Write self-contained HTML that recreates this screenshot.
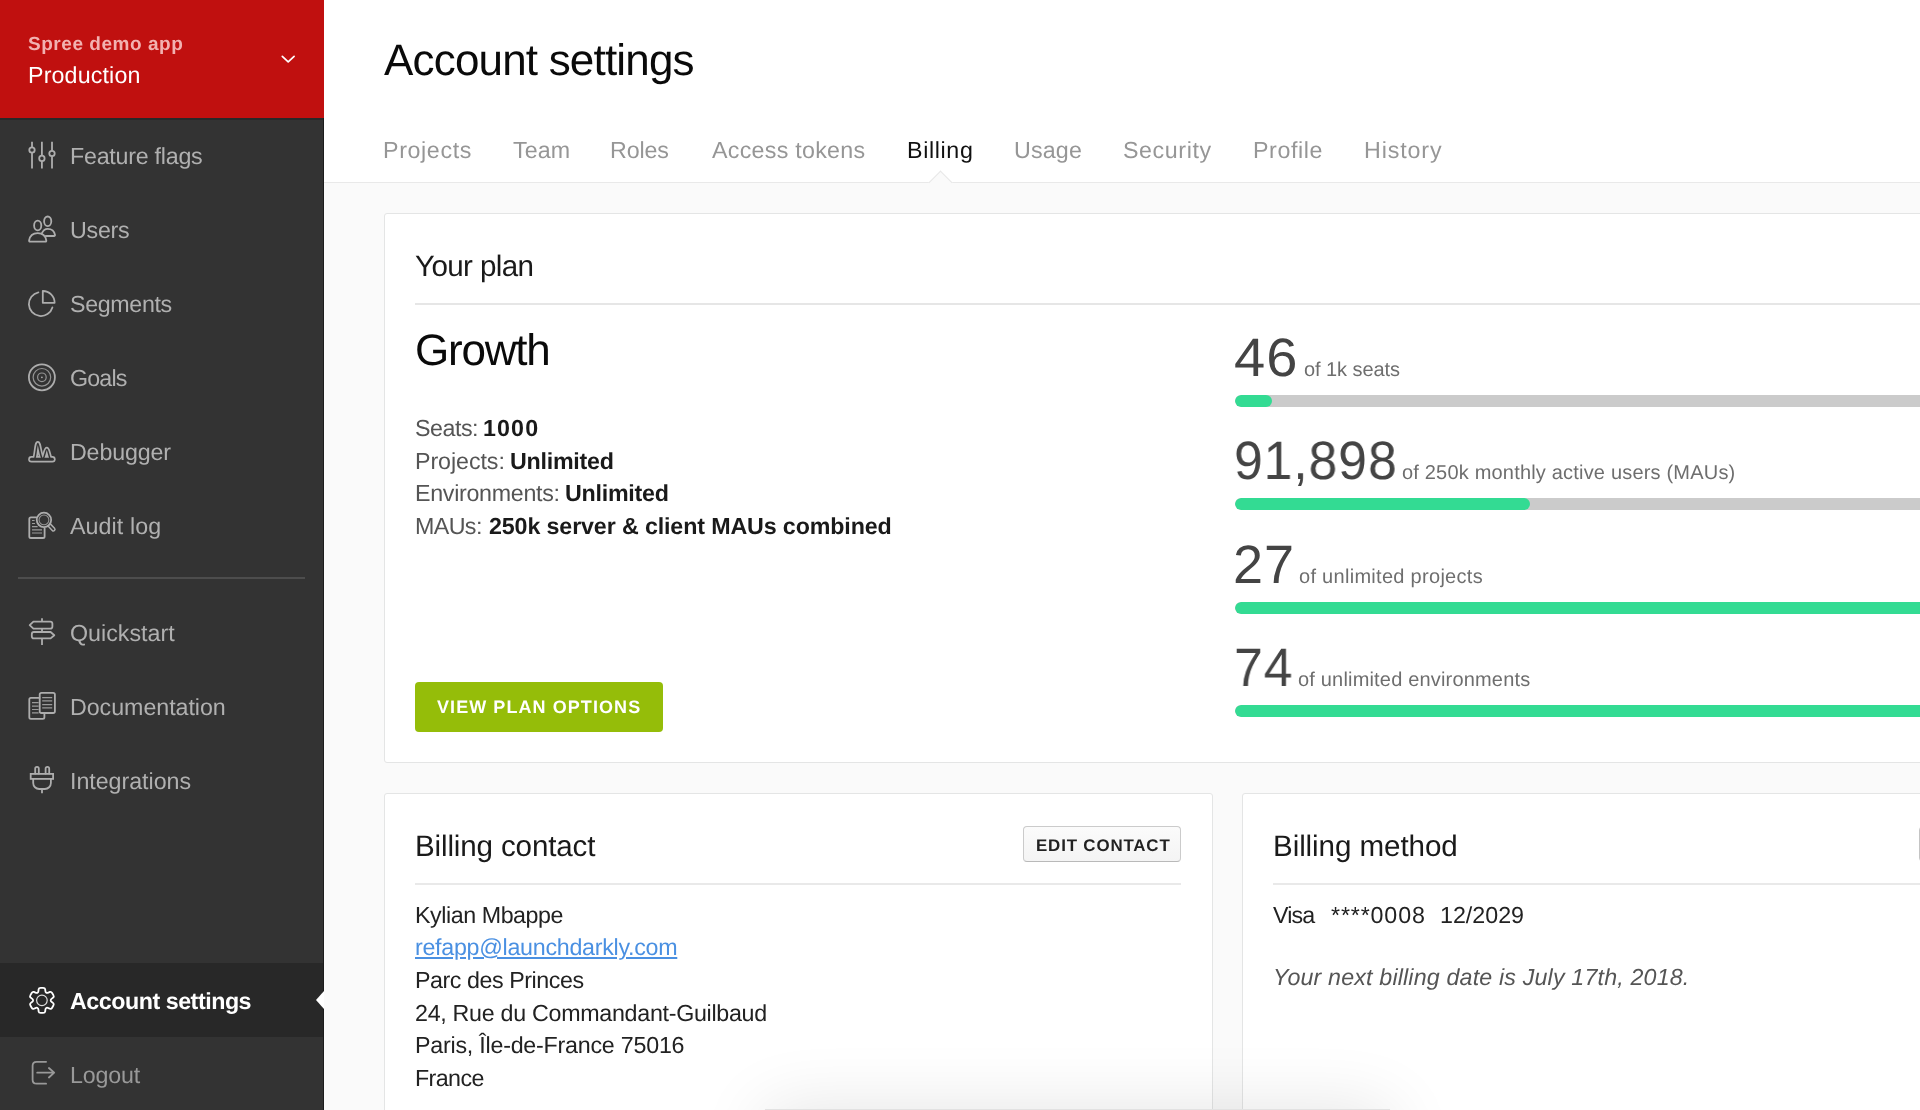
<!DOCTYPE html>
<html lang="en">
<head>
<meta charset="utf-8">
<title>Account settings</title>
<style>
*{box-sizing:border-box;margin:0;padding:0}
html,body{width:1920px;height:1110px;overflow:hidden;background:#fafafa;font-family:"Liberation Sans",sans-serif;color:#222}
.t{position:absolute;white-space:nowrap;line-height:1;z-index:5;will-change:transform;text-rendering:geometricPrecision}
.t b{color:#222;font-weight:bold}
#side{position:absolute;left:0;top:0;width:324px;height:1110px;background:#333;border-right:1px solid #1c1c1c}
#env{position:absolute;left:0;top:0;width:324px;height:118px;background:#c0100f}
#envline{position:absolute;left:0;top:118px;width:323px;height:2px;background:#272929}
.ico{position:absolute;left:27px;width:30px;height:30px;fill:none;stroke:#b9b9b9;stroke-width:1.5;stroke-linecap:round;stroke-linejoin:round;z-index:5}
#sep{position:absolute;left:18px;top:577px;width:287px;height:2px;background:#4d4d4d}
#active{position:absolute;left:0;top:963px;width:323px;height:74px;background:#282828}
#arrow{position:absolute;left:316px;top:991px;width:0;height:0;border-top:9px solid transparent;border-bottom:9px solid transparent;border-right:8px solid #fff}
#head{position:absolute;left:324px;top:0;width:1596px;height:183px;background:#fff;border-bottom:1px solid #e9e9e9}
#caret{position:absolute;left:932px;top:174px;width:17px;height:17px;background:#fafafa;border-left:1px solid #e7e7e7;border-top:1px solid #e7e7e7;transform:rotate(45deg)}
.card{position:absolute;background:#fff;border:1px solid #e4e5e5;border-radius:3px}
.hr{position:absolute;height:2px;background:#e9e9e9}
.bar{position:absolute;left:1235px;width:800px;height:12px;border-radius:6px;background:#cbcbcb;overflow:hidden}
.bar i{display:block;height:12px;border-radius:6px;background:#33db93}
.btn{position:absolute}
#toast{position:absolute;left:765px;top:1109px;width:625px;height:80px;background:#e4e4e4;border-top:1px solid #e2e2e2;box-shadow:0 0 70px rgba(0,0,0,.11);z-index:8}
</style>
</head>
<body>
<div id="side">
  <div id="env"></div>
  <div id="envline"></div>
  <div id="sep"></div>
  <div id="active"></div>
  <div id="arrow"></div>
</div>
<svg id="icons" width="324" height="1110" viewBox="0 0 324 1110" style="position:absolute;left:0;top:0;z-index:6" fill="none" stroke="#adadad" stroke-width="1.8" stroke-linecap="round" stroke-linejoin="round">
<!-- chevron -->
<path d="M282.3 56.3l5.9 5.6 5.9-5.6" stroke="#fff" stroke-width="1.7"/>
<!-- feature flags -->
<g stroke-linecap="butt"><path d="M32 141.8V168.6M41.9 141.8V168.6M52 141.8V168.6"/>
<circle cx="32" cy="150" r="2.7" fill="#333"/><circle cx="41.9" cy="158.4" r="2.7" fill="#333"/><circle cx="52" cy="153.5" r="2.7" fill="#333"/></g>
<!-- users -->
<ellipse cx="47.7" cy="221.3" rx="3.6" ry="4.8"/>
<path d="M41.8 233.4C43 230.5 45 228.8 47.7 228.8C52 228.8 54.4 231.6 55 235Q55.1 236 54.1 236H45.8"/>
<ellipse cx="37.7" cy="225.5" rx="3.6" ry="4.8"/>
<path d="M30 241.6Q29 241.6 29.1 240.5C29.8 236 33 233.1 37.7 233.1C42.4 233.1 45.6 236 46.3 240.5Q46.4 241.6 45.4 241.6Z"/>
<!-- segments -->
<path d="M38.4 292.3A12 12 0 1 0 52.4 307.4"/>
<path d="M42.8 291A11.8 11.8 0 0 1 54.6 302.8H42.8Z"/>
<!-- goals -->
<circle cx="41.9" cy="377.3" r="13"/><circle cx="41.9" cy="377.3" r="8.8" stroke-width="1.2" opacity=".8"/><circle cx="41.9" cy="377.3" r="4.3" stroke-width="1.2" opacity=".8"/><circle cx="41.9" cy="377.3" r=".9" fill="#adadad" stroke="none"/>
<!-- debugger -->
<g stroke-linejoin="round"><path d="M31.4 459.3H52.4" stroke-width="6.4"/><path d="M34.6 459.3C36.2 455 36.6 443.4 37.8 443.4C39 443.4 39.8 455 42.4 459.3" stroke-width="4.9"/><path d="M43 459.3C45 456 45.6 449.2 46.8 449.2C48 449.2 48.6 456 50.4 459.3" stroke-width="4.9"/>
<path d="M31.4 459.3H52.4" stroke="#333" stroke-width="3"/><path d="M34.6 459.3C36.2 455 36.6 443.4 37.8 443.4C39 443.4 39.8 455 42.4 459.3" stroke="#333" stroke-width="1.5"/><path d="M43 459.3C45 456 45.6 449.2 46.8 449.2C48 449.2 48.6 456 50.4 459.3" stroke="#333" stroke-width="1.5"/></g>
<!-- audit log -->
<path d="M36.2 517.4H30.9Q29.3 517.4 29.3 519V536.4Q29.3 538 30.9 538H43Q44.6 538 44.6 536.4V528.2"/>
<g stroke-width="1.2" stroke-linecap="butt" opacity=".85"><path d="M32 520.5H34.6M32 523.5H35M32 526.6H37.6M32 529.8H42M32 533H42"/></g>
<path d="M49.4 525.2L53.4 529.4" stroke-width="4.6"/><path d="M49.4 525.2L53.4 529.4" stroke="#333" stroke-width="1.6"/>
<circle cx="43.95" cy="519.9" r="7.2" fill="#333"/><circle cx="43.95" cy="519.9" r="4.9" stroke-width="1.1" opacity=".8"/>
<!-- quickstart -->
<g stroke-linecap="butt"><path d="M42 618.2V621.4M42 628.8V631.8M42 638.6V645"/></g>
<path d="M29.7 625.1L33.4 621.6H50.2Q52.4 621.6 52.4 623.8V626.4Q52.4 628.6 50.2 628.6H33.4Z"/>
<path d="M54.3 635.2L50.6 632H33.9Q31.8 632 31.8 634.2V636.2Q31.8 638.4 33.9 638.4H50.6Z"/>
<!-- documentation -->
<path d="M39.5 697.9H30.9Q29.3 697.9 29.3 699.5V717.2Q29.3 718.8 30.9 718.8H42.8Q44.4 718.8 44.4 717.2V713.6"/>
<rect x="39.7" y="692.8" width="15.2" height="20.2" rx="1.8"/>
<g stroke-width="1.2" stroke-linecap="butt" opacity=".85"><path d="M42.2 697.6H52.2M42.2 700.9H52.2M42.2 704.6H52.2M42.2 707.8H52.2M32 702.7H38.6M32 706.2H38.6M32 709.5H38.6M32 712.8H38.6"/></g>
<!-- integrations -->
<path d="M35.2 773.6V768.6a1.8 1.8 0 0 1 3.6 0V773.6M45.6 773.6V768.6a1.8 1.8 0 0 1 3.6 0V773.6"/>
<rect x="30.7" y="773.9" width="22.4" height="5" stroke-linejoin="miter"/>
<path d="M33.2 779V783a6 6 0 0 0 6 6h5.7a6 6 0 0 0 6-6V779"/><path d="M42 789V793.2" stroke-linecap="butt"/>
<!-- gear -->
<path d="M37.47 992.68L37.79 992.50Q38.27 992.22 38.44 990.90L38.66 989.14Q38.83 987.82 40.67 987.82L43.13 987.82Q44.97 987.82 45.14 989.14L45.36 990.90Q45.53 992.22 46.01 992.50L46.64 992.87Q47.12 993.14 48.35 992.63L49.99 991.94Q51.22 991.43 52.14 993.02L53.36 995.15Q54.28 996.74 53.22 997.55L51.81 998.62Q50.75 999.43 50.75 999.98L50.75 1000.72Q50.75 1001.27 51.81 1002.08L53.22 1003.15Q54.28 1003.96 53.36 1005.55L52.14 1007.68Q51.22 1009.27 49.99 1008.76L48.35 1008.07Q47.12 1007.56 46.64 1007.83L46.01 1008.20Q45.53 1008.48 45.36 1009.80L45.14 1011.56Q44.97 1012.88 43.13 1012.88L40.67 1012.88Q38.83 1012.88 38.66 1011.56L38.44 1009.80Q38.27 1008.48 37.79 1008.20L37.16 1007.83Q36.68 1007.56 35.45 1008.07L33.81 1008.76Q32.58 1009.27 31.66 1007.68L30.44 1005.55Q29.52 1003.96 30.58 1003.15L31.99 1002.08Q33.05 1001.27 33.05 1000.72L33.05 999.98Q33.05 999.43 31.99 998.62L30.58 997.55Q29.52 996.74 30.44 995.15L31.66 993.02Q32.58 991.43 33.81 991.94L35.45 992.63Q36.68 993.14 37.16 992.87Z" stroke="#fff" stroke-width="1.8"/><circle cx="41.9" cy="1000.35" r="5.3" stroke="#ddd" stroke-width="1.2"/>
<!-- logout -->
<g stroke="#999" stroke-width="1.8"><path d="M46.1 1061.8H36.6Q32.6 1061.8 32.6 1065.8V1079.7Q32.6 1083.7 36.6 1083.7H46.1"/><path d="M37.2 1072.7H54M48.9 1068L54.2 1072.7L48.9 1077.5"/></g>
</svg>
<div id="head"></div>
<div id="caret"></div>

<div class="card" style="left:384px;top:213px;width:1700px;height:550px"></div>
<div class="hr" style="left:415px;top:303px;width:1600px;height:1.5px;background:#e6e6e6"></div>
<div class="btn" style="left:415px;top:682px;width:248px;height:50px;background:#95bd09;border-radius:4px"></div>
<div class="bar" style="top:395px"><i style="width:37px"></i></div>
<div class="bar" style="top:498px"><i style="width:295px"></i></div>
<div class="bar" style="top:602px"><i style="width:800px"></i></div>
<div class="bar" style="top:705px"><i style="width:800px"></i></div>

<div class="card" style="left:384px;top:793px;width:829px;height:400px"></div>
<div class="btn" style="left:1023px;top:826px;width:158px;height:36px;border:1px solid #cbcbcb;border-bottom-color:#b9b9b9;border-radius:4px;background:linear-gradient(#fbfbfb,#f4f4f4)"></div>
<div class="hr" style="left:415px;top:883px;width:766px"></div>

<div class="card" style="left:1242px;top:793px;width:842px;height:400px"></div>
<div class="hr" style="left:1273px;top:883px;width:760px"></div>
<div class="btn" style="left:1919px;top:826px;width:120px;height:36px;border:1px solid #c4c4c4;border-radius:4px;background:#f7f7f7"></div>
<div id="toast"></div>

<div class="t" id="spree" style="left:28px;top:35px;font-size:19px;letter-spacing:0.54px;font-weight:bold;color:#f2b1b0">Spree demo app</div>
<div class="t" id="prod" style="left:28px;top:64px;font-size:23.25px;letter-spacing:0.14px;color:#fff">Production</div>
<div class="t" id="n1" style="left:70px;top:145px;font-size:23.25px;letter-spacing:-0.25px;color:#b0b0b0">Feature flags</div>
<div class="t" id="n2" style="left:70px;top:219px;font-size:23.25px;letter-spacing:-0.25px;color:#b0b0b0">Users</div>
<div class="t" id="n3" style="left:70px;top:293px;font-size:23.25px;letter-spacing:-0.35px;color:#b0b0b0">Segments</div>
<div class="t" id="n4" style="left:70px;top:367px;font-size:23.25px;letter-spacing:-0.84px;color:#b0b0b0">Goals</div>
<div class="t" id="n5" style="left:70px;top:441px;font-size:23.25px;letter-spacing:-0.17px;color:#b0b0b0">Debugger</div>
<div class="t" id="n6" style="left:70px;top:515px;font-size:23.25px;letter-spacing:0.08px;color:#b0b0b0">Audit log</div>
<div class="t" id="n7" style="left:70px;top:622px;font-size:23.25px;letter-spacing:0px;color:#b0b0b0">Quickstart</div>
<div class="t" id="n8" style="left:70px;top:696px;font-size:23.25px;letter-spacing:-0.05px;color:#b0b0b0">Documentation</div>
<div class="t" id="n9" style="left:70px;top:770px;font-size:23.25px;letter-spacing:-0.04px;color:#b0b0b0">Integrations</div>
<div class="t" id="n10" style="left:70px;top:990px;font-size:23.25px;letter-spacing:-0.47px;color:#fff;font-weight:bold">Account settings</div>
<div class="t" id="n11" style="left:70px;top:1064px;font-size:23.25px;letter-spacing:-0.18px;color:#999">Logout</div>
<div class="t" id="title" style="left:384px;top:39px;font-size:44px;letter-spacing:-0.82px;color:#0a0a0a">Account settings</div>
<div class="t" id="t1" style="left:382.5px;top:139px;font-size:23.25px;letter-spacing:0.63px;color:#969696">Projects</div>
<div class="t" id="t2" style="left:512.5px;top:139px;font-size:23.25px;letter-spacing:0.1px;color:#969696">Team</div>
<div class="t" id="t3" style="left:610.1px;top:139px;font-size:23.25px;letter-spacing:-0.12px;color:#969696">Roles</div>
<div class="t" id="t4" style="left:712.4px;top:139px;font-size:23.25px;letter-spacing:0.27px;color:#969696">Access tokens</div>
<div class="t" id="t5" style="left:907.4px;top:139px;font-size:23.25px;letter-spacing:0.64px;color:#111">Billing</div>
<div class="t" id="t6" style="left:1014.3px;top:139px;font-size:23.25px;letter-spacing:0.17px;color:#969696">Usage</div>
<div class="t" id="t7" style="left:1123.3px;top:139px;font-size:23.25px;letter-spacing:0.58px;color:#969696">Security</div>
<div class="t" id="t8" style="left:1253.1px;top:139px;font-size:23.25px;letter-spacing:0.6px;color:#969696">Profile</div>
<div class="t" id="t9" style="left:1364.4px;top:139px;font-size:23.25px;letter-spacing:0.87px;color:#969696">History</div>
<div class="t" id="yp" style="left:415px;top:252px;font-size:29.6px;letter-spacing:-0.62px;color:#1a1a1a">Your plan</div>
<div class="t" id="growth" style="left:415px;top:329px;font-size:44px;letter-spacing:-1.2px;color:#0a0a0a">Growth</div>
<div class="t" id="r1a" style="left:415px;top:417px;font-size:23.25px;letter-spacing:-0.48px;color:#555">Seats:</div>
<div class="t" id="r1b" style="left:483.4px;top:417px;font-size:23.25px;letter-spacing:1.13px;color:#1a1a1a;font-weight:bold">1000</div>
<div class="t" id="r2a" style="left:415px;top:450px;font-size:23.25px;letter-spacing:-0.07px;color:#555">Projects:</div>
<div class="t" id="r2b" style="left:510.2px;top:450px;font-size:23.25px;letter-spacing:-0.25px;color:#1a1a1a;font-weight:bold">Unlimited</div>
<div class="t" id="r3a" style="left:415px;top:482px;font-size:23.25px;letter-spacing:-0.3px;color:#555">Environments:</div>
<div class="t" id="r3b" style="left:565.4px;top:482px;font-size:23.25px;letter-spacing:-0.25px;color:#1a1a1a;font-weight:bold">Unlimited</div>
<div class="t" id="r4a" style="left:415px;top:515px;font-size:23.25px;letter-spacing:-0.6px;color:#555">MAUs:</div>
<div class="t" id="r4b" style="left:488.6px;top:515px;font-size:23.25px;letter-spacing:-0.13px;color:#1a1a1a;font-weight:bold">250k server &amp; client MAUs combined</div>
<div class="t" id="vpo" style="left:437px;top:698px;font-size:18px;letter-spacing:1.07px;color:#fff;font-weight:bold">VIEW PLAN OPTIONS</div>
<div class="t" id="b1" style="left:1234.3px;top:331px;font-size:54px;letter-spacing:1px;color:#444;transform:scaleX(1.038);transform-origin:0 50%">46</div>
<div class="t" id="l1" style="left:1304.2px;top:360px;font-size:20px;letter-spacing:-0.07px;color:#6e6e6e">of 1k seats</div>
<div class="t" id="b2" style="left:1233.8px;top:434px;font-size:54px;letter-spacing:1px;color:#444;transform:scaleX(0.956);transform-origin:0 50%">91,898</div>
<div class="t" id="l2" style="left:1402.3px;top:463px;font-size:20px;letter-spacing:0.19px;color:#6e6e6e">of 250k monthly active users (MAUs)</div>
<div class="t" id="b3" style="left:1232.9px;top:538px;font-size:54px;letter-spacing:1px;color:#444;transform:scaleX(1.000);transform-origin:0 50%">27</div>
<div class="t" id="l3" style="left:1299.4px;top:567px;font-size:20px;letter-spacing:0.29px;color:#6e6e6e">of unlimited projects</div>
<div class="t" id="b4" style="left:1233.7px;top:641px;font-size:54px;letter-spacing:1px;color:#444;transform:scaleX(0.958);transform-origin:0 50%">74</div>
<div class="t" id="l4" style="left:1297.6px;top:670px;font-size:20px;letter-spacing:0.18px;color:#6e6e6e">of unlimited environments</div>
<div class="t" id="bc" style="left:415px;top:832px;font-size:29.6px;letter-spacing:-0.15px;color:#1a1a1a">Billing contact</div>
<div class="t" id="ec" style="left:1035.7px;top:838px;font-size:16.9px;letter-spacing:0.84px;color:#222;font-weight:bold">EDIT CONTACT</div>
<div class="t" id="a1" style="left:415px;top:904px;font-size:23.25px;letter-spacing:-0.44px;color:#222">Kylian Mbappe</div>
<div class="t" id="a2" style="left:415px;top:936px;font-size:23.25px;letter-spacing:-0.28px;color:#4a90e2;text-decoration:underline">refapp@launchdarkly.com</div>
<div class="t" id="a3" style="left:415px;top:969px;font-size:23.25px;letter-spacing:-0.44px;color:#222">Parc des Princes</div>
<div class="t" id="a4" style="left:415px;top:1002px;font-size:23.25px;letter-spacing:-0.29px;color:#222">24, Rue du Commandant-Guilbaud</div>
<div class="t" id="a5" style="left:415px;top:1034px;font-size:23.25px;letter-spacing:-0.23px;color:#222">Paris, Île-de-France 75016</div>
<div class="t" id="a6" style="left:415px;top:1067px;font-size:23.25px;letter-spacing:-0.59px;color:#222">France</div>
<div class="t" id="bm" style="left:1273px;top:832px;font-size:29.6px;letter-spacing:-0.09px;color:#1a1a1a">Billing method</div>
<div class="t" id="v1" style="left:1273px;top:904px;font-size:23.25px;letter-spacing:-0.86px;color:#222">Visa</div>
<div class="t" id="v2" style="left:1331.4px;top:904px;font-size:23.25px;letter-spacing:0.85px;color:#222">****0008</div>
<div class="t" id="v3" style="left:1439.9px;top:904px;font-size:23.25px;letter-spacing:-0.01px;color:#222">12/2029</div>
<div class="t" id="nb" style="left:1273px;top:966px;font-size:23.25px;letter-spacing:0.16px;font-style:italic;color:#555">Your next billing date is July 17th, 2018.</div>
</body>
</html>
